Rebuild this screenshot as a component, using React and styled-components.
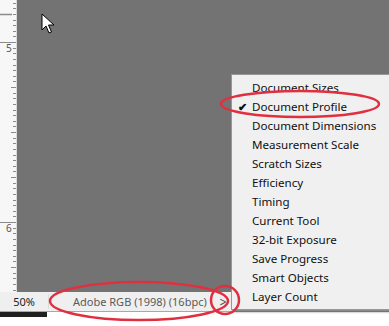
import React from "react";
import styled, { createGlobalStyle } from "styled-components";

const GlobalStyle = createGlobalStyle`
  html, body {
    margin: 0;
    padding: 0;
    background: #ffffff;
  }
  body {
    font-family: "Noto Sans", "Segoe UI", sans-serif;
  }
`;

const Window = styled.div`
  position: relative;
  width: 389px;
  height: 326px;
  overflow: hidden;
  background: #ffffff;
  display: grid;
  grid-template-rows: 292px 20px 5px 1fr;
`;

const Workspace = styled.div`
  display: grid;
  grid-template-columns: 17px 1fr;
`;

const Ruler = styled.div`
  position: relative;
  background: #f7f7f7;
  border-right: 1px solid #d8d8d8;
  overflow: hidden;
`;

const Canvas = styled.div`
  background: #737373;
`;

const StatusBar = styled.div`
  display: flex;
  align-items: center;
  background: #efefef;
  border-bottom: 1px solid #a8a8a8;
  font-size: 11px;
  color: #3a3a3a;
`;

const Zoom = styled.div`
  width: 48px;
  text-align: center;
  color: #222;
  border-right: 1px solid #dcdcdc;
`;

const Info = styled.div`
  padding-left: 24px;
  width: 145px;
  color: #5a5a5a;
`;

const Arrow = styled.div`
  width: 10px;
  text-align: center;
  color: #555;
  font-size: 12px;
  font-family: "DejaVu Sans", sans-serif;
  transform: scaleX(0.75);
`;

const BottomStrip = styled.div`
  display: flex;
`;

const Scroll = styled.div`
  width: 47px;
  background: #202020;
`;

const Menu = styled.div`
  position: absolute;
  left: 231px;
  top: 74px;
  width: 170px;
  padding: 3px 0 0;
  height: 231px;
  background: #f0f0f0;
  border: 1px solid #979797;
  box-shadow: 2px 2px 2px rgba(0, 0, 0, 0.45);
`;

const Item = styled.div`
  position: relative;
  height: 19px;
  line-height: 19px;
  padding-left: 20px;
  font-size: 11.6px;
  color: #111;
  white-space: nowrap;
`;

const Check = styled.span`
  position: absolute;
  left: 6px;
  top: 0;
  font-size: 11px;
  font-weight: bold;
  color: #111;
`;

const Overlay = styled.svg`
  position: absolute;
  left: 0;
  top: 0;
  pointer-events: none;
`;

const items = [
  "Document Sizes",
  "Document Profile",
  "Document Dimensions",
  "Measurement Scale",
  "Scratch Sizes",
  "Efficiency",
  "Timing",
  "Current Tool",
  "32-bit Exposure",
  "Save Progress",
  "Smart Objects",
  "Layer Count",
];

const RulerMarks = () => {
  const ticks = [];
  for (let i = -8; i < 48; i++) {
    const y = 42 + i * 5.625;
    if (y < 0 || y > 292) continue;
    const m = ((i % 32) + 32) % 32;
    let len = 4;
    if (m === 0) len = 17;
    else if (m % 8 === 0) len = 6;
    ticks.push(
      <line
        key={i}
        x1={17 - len}
        x2={17}
        y1={Math.round(y) + 0.5}
        y2={Math.round(y) + 0.5}
        stroke="#8a8a8a"
        strokeWidth="1"
      />
    );
  }
  return (
    <svg width="17" height="292" style={{ display: "block" }}>
      {ticks}
      <line x1="0" x2="12" y1="14.5" y2="14.5" stroke="#8a8a8a" strokeWidth="1.5" />
      <text x="6" y="52" fontSize="10" fill="#555" fontFamily="Noto Sans, sans-serif">5</text>
      <text x="6" y="232" fontSize="10" fill="#555" fontFamily="Noto Sans, sans-serif">6</text>
    </svg>
  );
};

export default function App() {
  return (
    <>
      <GlobalStyle />
      <Window>
        <Workspace>
          <Ruler>
            <RulerMarks />
          </Ruler>
          <Canvas />
        </Workspace>
        <StatusBar>
          <Zoom>50%</Zoom>
          <Info>Adobe RGB (1998) (16bpc)</Info>
          <Arrow>&gt;</Arrow>
        </StatusBar>
        <BottomStrip>
          <Scroll />
        </BottomStrip>
        <div />

        <Menu>
          {items.map((label) => (
            <Item key={label}>
              {label === "Document Profile" && <Check>✔</Check>}
              {label}
            </Item>
          ))}
        </Menu>

        <Overlay width="389" height="326" viewBox="0 0 389 326">
          <path
            d="M42 14 L42 30 L46 26 L49 33 L51.5 32 L48.5 25 L54 25 Z"
            fill="#ffffff"
            stroke="#000000"
            strokeWidth="1"
            strokeLinejoin="round"
          />
          <ellipse cx="300" cy="104" rx="79" ry="13" fill="none" stroke="#e03040" strokeWidth="2.5" />
          <ellipse cx="139" cy="301" rx="89" ry="19" fill="none" stroke="#e03040" strokeWidth="2.5" />
          <circle cx="225" cy="300" r="14" fill="none" stroke="#e03040" strokeWidth="2.5" />
        </Overlay>
      </Window>
    </>
  );
}
